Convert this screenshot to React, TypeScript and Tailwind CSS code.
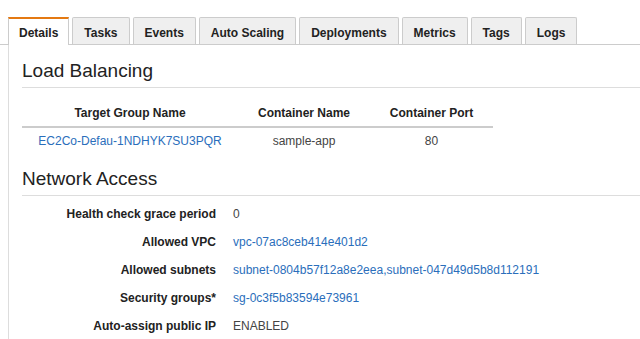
const tabs = ["Details", "Tasks", "Events", "Auto Scaling", "Deployments", "Metrics", "Tags", "Logs"];

const targets = [{ name: "EC2Co-Defau-1NDHYK7SU3PQR", container: "sample-app", port: "80" }];

const network: { label: string; value: string; link?: boolean }[] = [
  { label: "Health check grace period", value: "0" },
  { label: "Allowed VPC", value: "vpc-07ac8ceb414e401d2", link: true },
  { label: "Allowed subnets", value: "subnet-0804b57f12a8e2eea,subnet-047d49d5b8d112191", link: true },
  { label: "Security groups*", value: "sg-0c3f5b83594e73961", link: true },
  { label: "Auto-assign public IP", value: "ENABLED" },
];

function Tabs() {
  return (
    <div className="flex items-end gap-[3px] border-b border-[#cccccc] pl-[8px]">
      {tabs.map((t, i) =>
        i === 0 ? (
          <div
            key={t}
            className="h-[28px] -mb-px bg-white border-x border-[#cccccc] border-t-[2px] border-t-[#e47911] px-[10px] pt-[5px] text-[12px] font-bold text-[#222]"
          >
            {t}
          </div>
        ) : (
          <div
            key={t}
            className="h-[27px] bg-[#efefef] border-x border-t border-[#cccccc] rounded-t-[2px] px-[11px] pt-[6px] text-[12px] font-bold text-[#222]"
          >
            {t}
          </div>
        )
      )}
    </div>
  );
}

function Heading({ children, className }: { children: string; className?: string }) {
  return (
    <h2 className={`text-[19px] leading-[26px] text-[#222] border-b border-[#dddddd] pb-[3px] ${className ?? ""}`}>
      {children}
    </h2>
  );
}

export default function App() {
  return (
    <div className="w-[640px] h-[339px] overflow-hidden bg-white pt-[17px] font-['Liberation_Sans',Arial,sans-serif]">
      <Tabs />
      <div className="ml-[8px] border-l border-[#dddddd] pl-[13px] h-[400px]">
        <Heading className="pt-[13px]">Load Balancing</Heading>

        <div className="mt-[13px] w-[471px] text-[12px]">
          <div className="grid grid-cols-[216px_132px_123px] h-[27px] border-b-[2px] border-[#cccccc] font-bold text-[#222] leading-[25px] text-center">
            <div>Target Group Name</div>
            <div>Container Name</div>
            <div>Container Port</div>
          </div>
          {targets.map((r) => (
            <div key={r.name} className="grid grid-cols-[216px_132px_123px] h-[27px] leading-[27px] text-center text-[#444]">
              <div className="text-[#2a6ebb]">{r.name}</div>
              <div>{r.container}</div>
              <div>{r.port}</div>
            </div>
          ))}
        </div>

        <Heading className="mt-[11px]">Network Access</Heading>

        <div className="mt-[4px] text-[12px]">
          {network.map((r) => (
            <div key={r.label} className="flex h-[28px] items-center">
              <div className="w-[194px] text-right font-bold text-[#222]">{r.label}</div>
              <div className={`pl-[17px] ${r.link ? "text-[#2a6ebb]" : "text-[#444]"}`}>{r.value}</div>
            </div>
          ))}
        </div>
      </div>
    </div>
  );
}
